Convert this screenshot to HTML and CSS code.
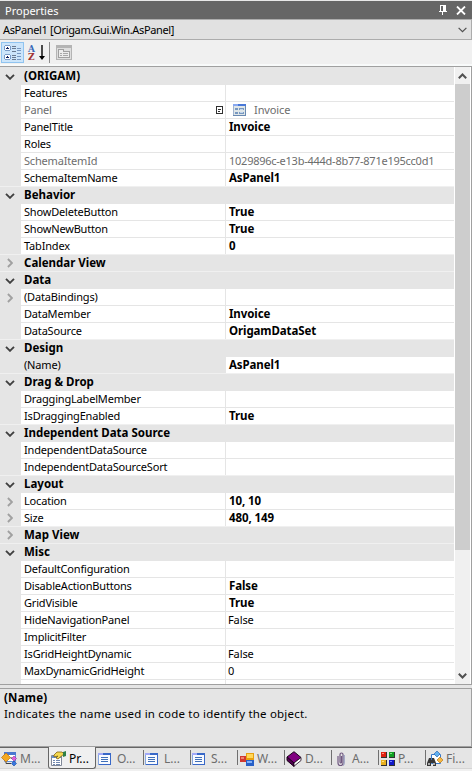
FILE: index.html
```html
<!DOCTYPE html>
<html lang="en">
<head>
<meta charset="utf-8">
<title>Properties</title>
<link rel="stylesheet" href="styles.css">
</head>
<body>
<svg class="defs" width="0" height="0">
  <symbol id="open" viewBox="0 0 10 6"><path d="M1 .8 5 4.8 9 .8" fill="none" stroke="#404040" stroke-width="1.9"/></symbol>
  <symbol id="closed" viewBox="0 0 6 10"><path d="M.9 1 4.9 5 .9 9" fill="none" stroke="#a0a0a0" stroke-width="1.8"/></symbol>
  <symbol id="form" viewBox="0 0 13 12"><g shape-rendering="crispEdges"><path fill="#f8faff" d="M0 0h13v12H0z"/><path fill="#3868c8" d="M5 0h8v2H5zM12 2h1v10h-1zM1 11h12v1H1z"/><path fill="#a0a8f8" d="M0 0h5v2H0z"/><path fill="#88a8e0" d="M0 2h1v10H0z"/><path fill="#4070b8" d="M3 4h7v1H3zM3 6h7v1H3zM3 8h7v1H3z"/></g></symbol>
  <symbol id="panel" viewBox="0 0 13 12"><g shape-rendering="crispEdges"><path fill="#dfe6e8" d="M0 0h13v12H0z"/><path fill="#4878d8" d="M5 0h8v2H5z"/><path fill="#88a8f0" d="M0 0h5v2H0z"/><path fill="#6888b0" d="M12 2h1v10h-1zM0 11h13v1H0z"/><path fill="#a0b4d0" d="M0 2h1v9H0z"/><path fill="#7898c0" d="M2 4h3v2H2zM6 4h5v2H6zM2 8h3v2H2zM6 8h5v2H6z"/><path fill="#c0d4ec" d="M7 5h3v1H7zM7 8h3v1H7z"/></g></symbol>
</svg>
<div class="window">
  <header class="title">
    <span>Properties</span>
    <svg class="pin" width="8" height="11" viewBox="0 0 8 11" shape-rendering="crispEdges"><path fill="#fff" fill-rule="evenodd" d="M1 0h6v6h1v1H4v3H3V7H0V6h1zM2 1v5h2V1z"/></svg>
    <svg width="10" height="9" viewBox="0 0 10 9"><path d="M1 .5 9 8.5M9 .5 1 8.5" stroke="#fff" stroke-width="1.8"/></svg>
  </header>
  <div class="combo">
    <span>AsPanel1 [Origam.Gui.Win.AsPanel]</span>
    <svg width="9" height="6" viewBox="0 0 9 6"><path d="M.6.8 4.5 4.7 8.4.8" fill="none" stroke="#505050" stroke-width="1.2"/></svg>
  </div>
  <div class="toolbar">
    <div class="tool on">
      <svg width="17" height="17" viewBox="0 0 17 17" shape-rendering="crispEdges"><path fill="#7a9cc8" d="M1 1h5v1H1zM1 6h5v1H1zM0 2h1v4H0zM6 2h1v4H6zM1 10h5v1H1zM1 15h5v1H1zM0 11h1v4H0zM6 11h1v4H6z"/><path fill="#fff" d="M1 2h5v4H1zM1 11h5v4H1z"/><path fill="#102060" d="M2 3.500h3v1H2zM3 3h1v2H3zM2 12.500h3v1H2zM3 12h1v2H3z"/><path fill="#6a7a90" d="M8 2h4v1H8zM8 4h4v1H8zM8 7h4v1H8zM8 11h4v1H8zM8 13h4v1H8zM8 15h4v1H8z"/><path fill="#7898c0" d="M13 4h4v1h-4zM13 6h4v1h-4zM13 9h4v1h-4zM13 12h4v1h-4zM13 15h4v1h-4z"/></svg>
    </div>
    <div class="tool sort"><span class="az"><b>A</b><b>Z</b></span><svg width="6" height="15" viewBox="0 0 6 15"><path d="M2.300 0h1.400v11H6l-3 4-3-4h2.300z"/></svg></div>
    <i class="rule"></i>
    <svg class="pages" width="16" height="15" viewBox="0 0 16 15" shape-rendering="crispEdges"><path fill="#b4b4b4" d="M0 0h16v15H0z"/><path fill="#dedede" d="M1 3h14v11H1z"/><path fill="#a0a0a0" d="M2 4h6v2h6v7H2z"/><path fill="#ececec" d="M3 5h4v2h6v5H3z"/><path fill="#a8a8a8" d="M4 8h2v1H4zM7 8h5v1H7zM4 10h2v1H4zM7 10h5v1H7z"/></svg>
  </div>
  <div class="view">
    <div class="grid">
      <div class="cat first"><i><svg><use href="#open"/></svg></i><b>(ORIGAM)</b></div>
      <div class="row"><i></i><span>Features</span><em></em></div>
      <div class="row dim"><i></i><span>Panel<svg class="mark" width="7" height="8" viewBox="0 0 7 8" shape-rendering="crispEdges"><path fill="#303030" d="M0 0h7v8H0zM1 1v6h5V1z" fill-rule="evenodd"/><path fill="#303030" d="M2 3h3v1H2zM2 5h2v1H2z"/></svg></span><em class="pic"><svg class="mini"><use href="#panel"/></svg>Invoice</em></div>
      <div class="row"><i></i><span>PanelTitle</span><em><b>Invoice</b></em></div>
      <div class="row"><i></i><span>Roles</span><em></em></div>
      <div class="row dim"><i></i><span>SchemaItemId</span><em class="guid">1029896c-e13b-444d-8b77-871e195cc0d1</em></div>
      <div class="row last"><i></i><span>SchemaItemName</span><em><b>AsPanel1</b></em></div>
      <div class="cat"><i><svg><use href="#open"/></svg></i><b>Behavior</b></div>
      <div class="row"><i></i><span>ShowDeleteButton</span><em><b>True</b></em></div>
      <div class="row"><i></i><span>ShowNewButton</span><em><b>True</b></em></div>
      <div class="row last"><i></i><span>TabIndex</span><em><b>0</b></em></div>
      <div class="cat last"><i><svg class="c"><use href="#closed"/></svg></i><b>Calendar View</b></div>
      <div class="cat"><i><svg><use href="#open"/></svg></i><b>Data</b></div>
      <div class="row"><i><svg class="c"><use href="#closed"/></svg></i><span>(DataBindings)</span><em></em></div>
      <div class="row"><i></i><span>DataMember</span><em><b>Invoice</b></em></div>
      <div class="row last"><i></i><span>DataSource</span><em><b>OrigamDataSet</b></em></div>
      <div class="cat"><i><svg><use href="#open"/></svg></i><b>Design</b></div>
      <div class="row sel last"><i></i><span>(Name)</span><em><b>AsPanel1</b></em></div>
      <div class="cat"><i><svg><use href="#open"/></svg></i><b>Drag &amp; Drop</b></div>
      <div class="row"><i></i><span>DraggingLabelMember</span><em></em></div>
      <div class="row last"><i></i><span>IsDraggingEnabled</span><em><b>True</b></em></div>
      <div class="cat"><i><svg><use href="#open"/></svg></i><b>Independent Data Source</b></div>
      <div class="row"><i></i><span>IndependentDataSource</span><em></em></div>
      <div class="row last"><i></i><span>IndependentDataSourceSort</span><em></em></div>
      <div class="cat"><i><svg><use href="#open"/></svg></i><b>Layout</b></div>
      <div class="row"><i><svg class="c"><use href="#closed"/></svg></i><span>Location</span><em><b>10, 10</b></em></div>
      <div class="row last"><i><svg class="c"><use href="#closed"/></svg></i><span>Size</span><em><b>480, 149</b></em></div>
      <div class="cat last"><i><svg class="c"><use href="#closed"/></svg></i><b>Map View</b></div>
      <div class="cat"><i><svg><use href="#open"/></svg></i><b>Misc</b></div>
      <div class="row"><i></i><span>DefaultConfiguration</span><em></em></div>
      <div class="row"><i></i><span>DisableActionButtons</span><em><b>False</b></em></div>
      <div class="row"><i></i><span>GridVisible</span><em><b>True</b></em></div>
      <div class="row"><i></i><span>HideNavigationPanel</span><em>False</em></div>
      <div class="row"><i></i><span>ImplicitFilter</span><em></em></div>
      <div class="row"><i></i><span>IsGridHeightDynamic</span><em>False</em></div>
      <div class="row"><i></i><span>MaxDynamicGridHeight</span><em>0</em></div>
      <div class="row"><i></i><span>NewRecordInDialog</span><em>False</em></div>
    </div>
    <div class="scroll">
      <div class="arrow"><svg width="9" height="6" viewBox="0 0 9 6"><path d="M.8 5.2 4.5 1.5 8.2 5.2" fill="none" stroke="#505050" stroke-width="2"/></svg></div>
      <div class="thumb"></div>
      <div class="arrow down"><svg width="9" height="6" viewBox="0 0 9 6"><path d="M.8.8 4.5 4.5 8.2.8" fill="none" stroke="#505050" stroke-width="2"/></svg></div>
    </div>
  </div>
  <div class="help"><b>(Name)</b><p>Indicates the name used in code to identify the object.</p></div>
  <nav class="tabs">
    <div class="tab"><svg viewBox="0 0 16 16"><path fill="#fff" stroke="#6090d8" d="M3.5 2.5h11v8h-11z"/><path fill="#4a78d0" d="M3 1h12v3H3z"/><path fill="#f4a820" stroke="#b87010" stroke-width=".7" d="M5 2 9.500 6.500 5 11 .5 6.500z"/><path fill="#e060d8" stroke="#9030a0" stroke-width=".6" d="m13 5 2.500 2.500L13 10l-2.500-2.500z"/><path fill="#3878e0" stroke="#1848a0" stroke-width=".6" d="m13 10 2.500 2.500L13 15l-2.500-2.500z"/><path stroke="#404040" fill="none" d="M5 11v1.500h5M9.500 7h1.500"/></svg><span>M...</span></div>
    <div class="tab active"><svg viewBox="0 0 16 16"><path fill="#fff" stroke="#808898" d="M1.500 4.500h10v10h-10z"/><path fill="#6090d8" d="M2 5h9v2H2z"/><path stroke="#7088b0" d="M3 9.500h2m1 0h4M3 11.500h2m1 0h4M3 13.500h2m1 0h4"/><path fill="#f4d850" stroke="#806010" stroke-width=".8" d="m4 4 3-3h5l2 2-3 2.500-3 2.500-2-1 2-2-4 1z"/><path fill="#308048" d="m13 1 3-1v5l-3 1z"/></svg><span>Pr...</span></div>
    <div class="tab"><svg class="f"><use href="#form"/></svg><span>O...</span></div>
    <div class="tab"><svg class="f"><use href="#form"/></svg><span>L...</span></div>
    <div class="tab"><svg class="f"><use href="#form"/></svg><span>S...</span></div>
    <div class="tab"><svg class="w" viewBox="0 0 14 14" shape-rendering="crispEdges"><path fill="#d03830" d="M0 4h6v6H0z"/><path fill="#f08070" d="M1 5h3v2H1z"/><path fill="#e8a010" d="M6 1h8v7H6z"/><path fill="#ffd858" d="M7 2h6v4H7z"/><path fill="#2860c8" d="M6 8h8v6H6z"/><path fill="#80b0f8" d="M7 9h5v2H7z"/></svg><span>W...</span></div>
    <div class="tab"><svg class="k" viewBox="0 0 16 16"><path fill="#800080" stroke="#180018" d="M8 .7 15 6.500 8 12 1 6z"/><path fill="#500050" stroke="#180018" d="M1 6v3.500l7 6V12z"/><path fill="#fff" stroke="#180018" stroke-width=".8" d="m8 12 7-5.500V9.500l-7 5.700z"/></svg><span>D...</span></div>
    <div class="tab"><svg class="clip" viewBox="0 0 16 16"><path fill="none" stroke="#705880" stroke-width="1.200" d="M5 5v7q0 2.500 2.500 2.500T10 12V3.500Q10 2 8.500 2T7 3.500V11q0 1 .8 1t.7-1V5"/><path fill="none" stroke="#8890b8" d="M11.200 4v8.500q0 1.500-1.200 2"/></svg><span>A...</span></div>
    <div class="tab"><svg class="w" viewBox="0 0 14 14" shape-rendering="crispEdges"><path fill="#303030" d="M0 0h6v6H0zM8 0h6v6H8zM0 8h6v6H0zM8 8h6v6H8z"/><path fill="#e02010" d="M0 0h5v5H0z"/><path fill="#10a020" d="M8 0h5v5H8z"/><path fill="#e8b020" d="M0 8h5v5H0z"/><path fill="#1018c8" d="M8 8h5v5H8z"/><path fill="#ff9080" d="M1 1h2v1H1z"/><path fill="#80e080" d="M9 1h2v1H9z"/><path fill="#ffe080" d="M1 9h2v1H1z"/><path fill="#7080ff" d="M9 9h2v1H9z"/></svg><span>P...</span></div>
    <div class="tab"><svg viewBox="0 0 16 16"><path fill="#fff" stroke="#3878c8" d="M4.500 3.500h9v9h-9z"/><path fill="#60b0f0" stroke="#2868b8" stroke-width=".7" d="m7 3 3-3 3 3-3 3z"/><path fill="#f8b840" stroke="#b87818" stroke-width=".7" d="m13 6 3 3-3 3-3-3z"/><path fill="#383838" d="M2 7h2v2h1V7h2l2 5v3H6v-3H4v3H0v-3z"/><path fill="#aaa" d="M1 12h2v2H1zM6 12h2v2H6z"/></svg><span>Fi...</span></div>
  </nav>
</div>
</body>
</html>
```

FILE: styles.css
```css
* { box-sizing: border-box; }
body { margin: 0; background: #f0f0f0; font: 11px/16px "Noto Sans", sans-serif; color: #000; }
b { font-size: 11.500px; }
.defs { position: absolute; }
.window { width: 472px; height: 771px; display: flex; flex-direction: column; overflow: hidden; white-space: nowrap; }
.title { height: 19px; border-top: 1px solid #e8e8e8; background: #666; color: #fff; display: flex; align-items: center; padding: 1px 6px 0 5px; gap: 9px; }
.title span { flex: 1; }
.combo { height: 21px; border: 1px solid #acacac; border-left: 0; background: #e1e1e1; display: flex; align-items: center; justify-content: space-between; padding: 1px 4px 0 3px; letter-spacing: -.35px; }
.toolbar { height: 26px; border-bottom: 2px solid #f8fafa; background: #f0f0f0; display: flex; padding-top: 2px; padding-left: 1px; }
.tool { width: 23px; height: 21px; display: flex; align-items: center; justify-content: center; }
.on { background: #cce5fa; border: 1px solid #90c4f0; }
.sort { width: 25px; }
.az { display: grid; margin-right: 4px; }
.az b { font: bold 9px/8px "DejaVu Serif", serif; }
.az b:first-child { color: #3868b8; }
.az b:last-child { color: #a03030; }
.rule { width: 1px; height: 21px; background: #8c8c8c; }
.pages { margin: 3px 0 0 6px; }
.view { height: 619px; border: solid #a0a0a0; border-width: 1px 1px 1px 0; display: flex; overflow: hidden; background: #fff; }
.grid { width: 454px; flex: none; }
.cat { height: 17px; background: #e5e5e5; display: flex; }
.first { height: 18px; padding-top: 1px; }
.last { border-bottom: 1px solid #f0f0f0; }
.row { height: 17px; display: grid; grid-template-columns: 21px 204px 229px; }
i { width: 21px; flex: none; background: #e5e5e5; display: flex; align-items: center; padding-left: 5px; }
.toolbar .rule { width: 1px; padding: 0; background: #8c8c8c; }
i svg { width: 10px; height: 6px; }
i .c { width: 6px; height: 10px; margin-left: 2px; }
.cat b { padding-left: 3px; }
.row span { padding-left: 3px; border-bottom: 1px solid #e5e5e5; display: flex; justify-content: space-between; align-items: center; letter-spacing: -.18px; }
.row em { font-style: normal; padding-left: 2px; border: solid #e5e5e5; border-width: 0 0 1px 1px; letter-spacing: -.1px; }
.row b { padding-left: 1px; }
.last span, .last em { border-bottom: 0; }
.dim { color: #6d6d6d; }
.row .guid { padding-left: 3px; letter-spacing: -.25px; }
.mark { margin-right: 2px; }
.row .pic { display: flex; align-items: center; gap: 8px; padding-left: 7px; }
.mini { width: 13px; height: 12px; }
.sel span { background: #e5e5e5; }
.scroll { width: 16px; margin-left: 1px; height: 617px; background: #f0f0f0; border-right: 1px solid #fff; display: flex; flex-direction: column; }
.arrow { height: 17px; flex: none; display: flex; align-items: center; justify-content: center; }
.thumb { height: 466px; background: #cdcdcd; }
.down { margin-top: auto; }
.help { height: 59px; margin-top: 3px; border: 1px solid #a0a0a0; border-left: 0; background: #e5e5e5; padding: 1px 4px; box-shadow: 0 -3px #e5e5e5; font-size: 11.500px; letter-spacing: .2px; }
.help p { margin: 0; }
.tabs { height: 22px; border-top: 1px solid #666; border-bottom: 1px solid #d5d5d5; background: #e5e5e5; display: flex; color: #6d6d6d; }
.tab { width: 47px; height: 21px; display: flex; align-items: center; position: relative; padding-left: 1px; gap: 3px; font-size: 12px; }
.tab svg { width: 16px; height: 16px; flex: none; }
.tab:nth-child(n+4)::before { content: ""; position: absolute; left: 0; top: 2px; width: 1px; height: 15px; background: #707070; }
.tab:nth-child(n+3) { padding-left: 2px; }
.tab:first-child, .active { width: 48px; }
.active { margin-top: -1px; padding-top: 2px; height: 22px; background: #f0f0f0; color: #000; border: 1px solid #666; border-top: 0; border-radius: 0 0 3px 3px; }
.tab .f { width: 13px; height: 12px; margin: 0 3px 0 0; }
.tab .w { width: 14px; height: 14px; margin-left: 1px; }
```
